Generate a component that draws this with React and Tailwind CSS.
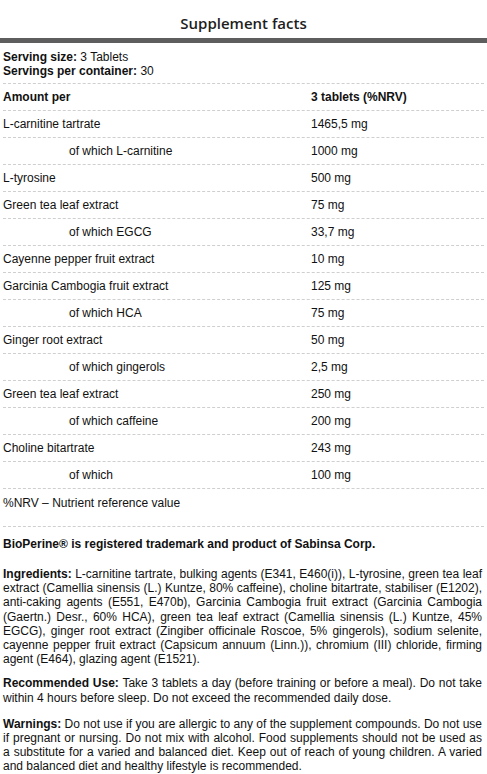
const rows = [
  { name: "L-carnitine tartrate", amount: "1465,5 mg" },
  { name: "of which L-carnitine", amount: "1000 mg", sub: true },
  { name: "L-tyrosine", amount: "500 mg" },
  { name: "Green tea leaf extract", amount: "75 mg" },
  { name: "of which EGCG", amount: "33,7 mg", sub: true },
  { name: "Cayenne pepper fruit extract", amount: "10 mg" },
  { name: "Garcinia Cambogia fruit extract", amount: "125 mg" },
  { name: "of which HCA", amount: "75 mg", sub: true },
  { name: "Ginger root extract", amount: "50 mg" },
  { name: "of which gingerols", amount: "2,5 mg", sub: true },
  { name: "Green tea leaf extract", amount: "250 mg" },
  { name: "of which caffeine", amount: "200 mg", sub: true },
  { name: "Choline bitartrate", amount: "243 mg" },
  { name: "of which", amount: "100 mg", sub: true },
];

function Row({ left, right, bold, sub }) {
  return (
    <div
      className={`grid grid-cols-[308px_1fr] py-[6px] leading-[14px] border-b border-dashed border-[#cfcfcf] ${
        bold ? "font-bold" : ""
      }`}
    >
      <div className={sub ? "pl-[66px]" : ""}>{left}</div>
      <div>{right}</div>
    </div>
  );
}

export default function App() {
  return (
    <div className="w-[487px] bg-white text-[#111] font-['Liberation_Sans',Arial,sans-serif] text-[12px]">
      {/* title */}
      <div className="pt-[12px] pb-[4px] text-center">
        <h1 className="text-[15px] leading-[22px] font-semibold text-[#1e1e1e] font-['Open_Sans',sans-serif]">
          Supplement facts
        </h1>
      </div>
      <div className="h-[5px] bg-[#5e5e5e]" />

      <div className="px-[3px]">
        {/* serving */}
        <div className="pt-[7px] pb-[5px] leading-[14px] border-b border-dashed border-[#cfcfcf]">
          <div>
            <b>Serving size:</b> 3 Tablets
          </div>
          <div>
            <b>Servings per container:</b> 30
          </div>
        </div>

        <Row left="Amount per" right="3 tablets (%NRV)" bold />
        {rows.map((r, i) => (
          <Row key={i} left={r.name} right={r.amount} sub={r.sub} />
        ))}

        <div className="pt-[7px] pb-[16px] leading-[14px] border-b border-dashed border-[#cfcfcf]">
          %NRV – Nutrient reference value
        </div>

        <p className="mt-[10px] leading-[14px] font-bold">
          BioPerine® is registered trademark and product of Sabinsa Corp.
        </p>

        <div className="pr-[2px] leading-[14.2px] text-justify">
          <p className="mt-[16px]">
            <b>Ingredients:</b> L-carnitine tartrate, bulking agents (E341, E460(i)), L-tyrosine, green tea leaf
            extract (Camellia sinensis (L.) Kuntze, 80% caffeine), choline bitartrate, stabiliser (E1202),
            anti-caking agents (E551, E470b), Garcinia Cambogia fruit extract (Garcinia Cambogia (Gaertn.)
            Desr., 60% HCA), green tea leaf extract (Camellia sinensis (L.) Kuntze, 45% EGCG), ginger root
            extract (Zingiber officinale Roscoe, 5% gingerols), sodium selenite, cayenne pepper fruit extract
            (Capsicum annuum (Linn.)), chromium (III) chloride, firming agent (E464), glazing agent (E1521).
          </p>
          <p className="mt-[10px]">
            <b>Recommended Use:</b> Take 3 tablets a day (before training or before a meal). Do not take within
            4 hours before sleep. Do not exceed the recommended daily dose.
          </p>
          <p className="mt-[12px]">
            <b>Warnings:</b> Do not use if you are allergic to any of the supplement compounds. Do not use if
            pregnant or nursing. Do not mix with alcohol. Food supplements should not be used as a substitute
            for a varied and balanced diet. Keep out of reach of young children. A varied and balanced diet and
            healthy lifestyle is recommended.
          </p>
        </div>
      </div>
    </div>
  );
}
